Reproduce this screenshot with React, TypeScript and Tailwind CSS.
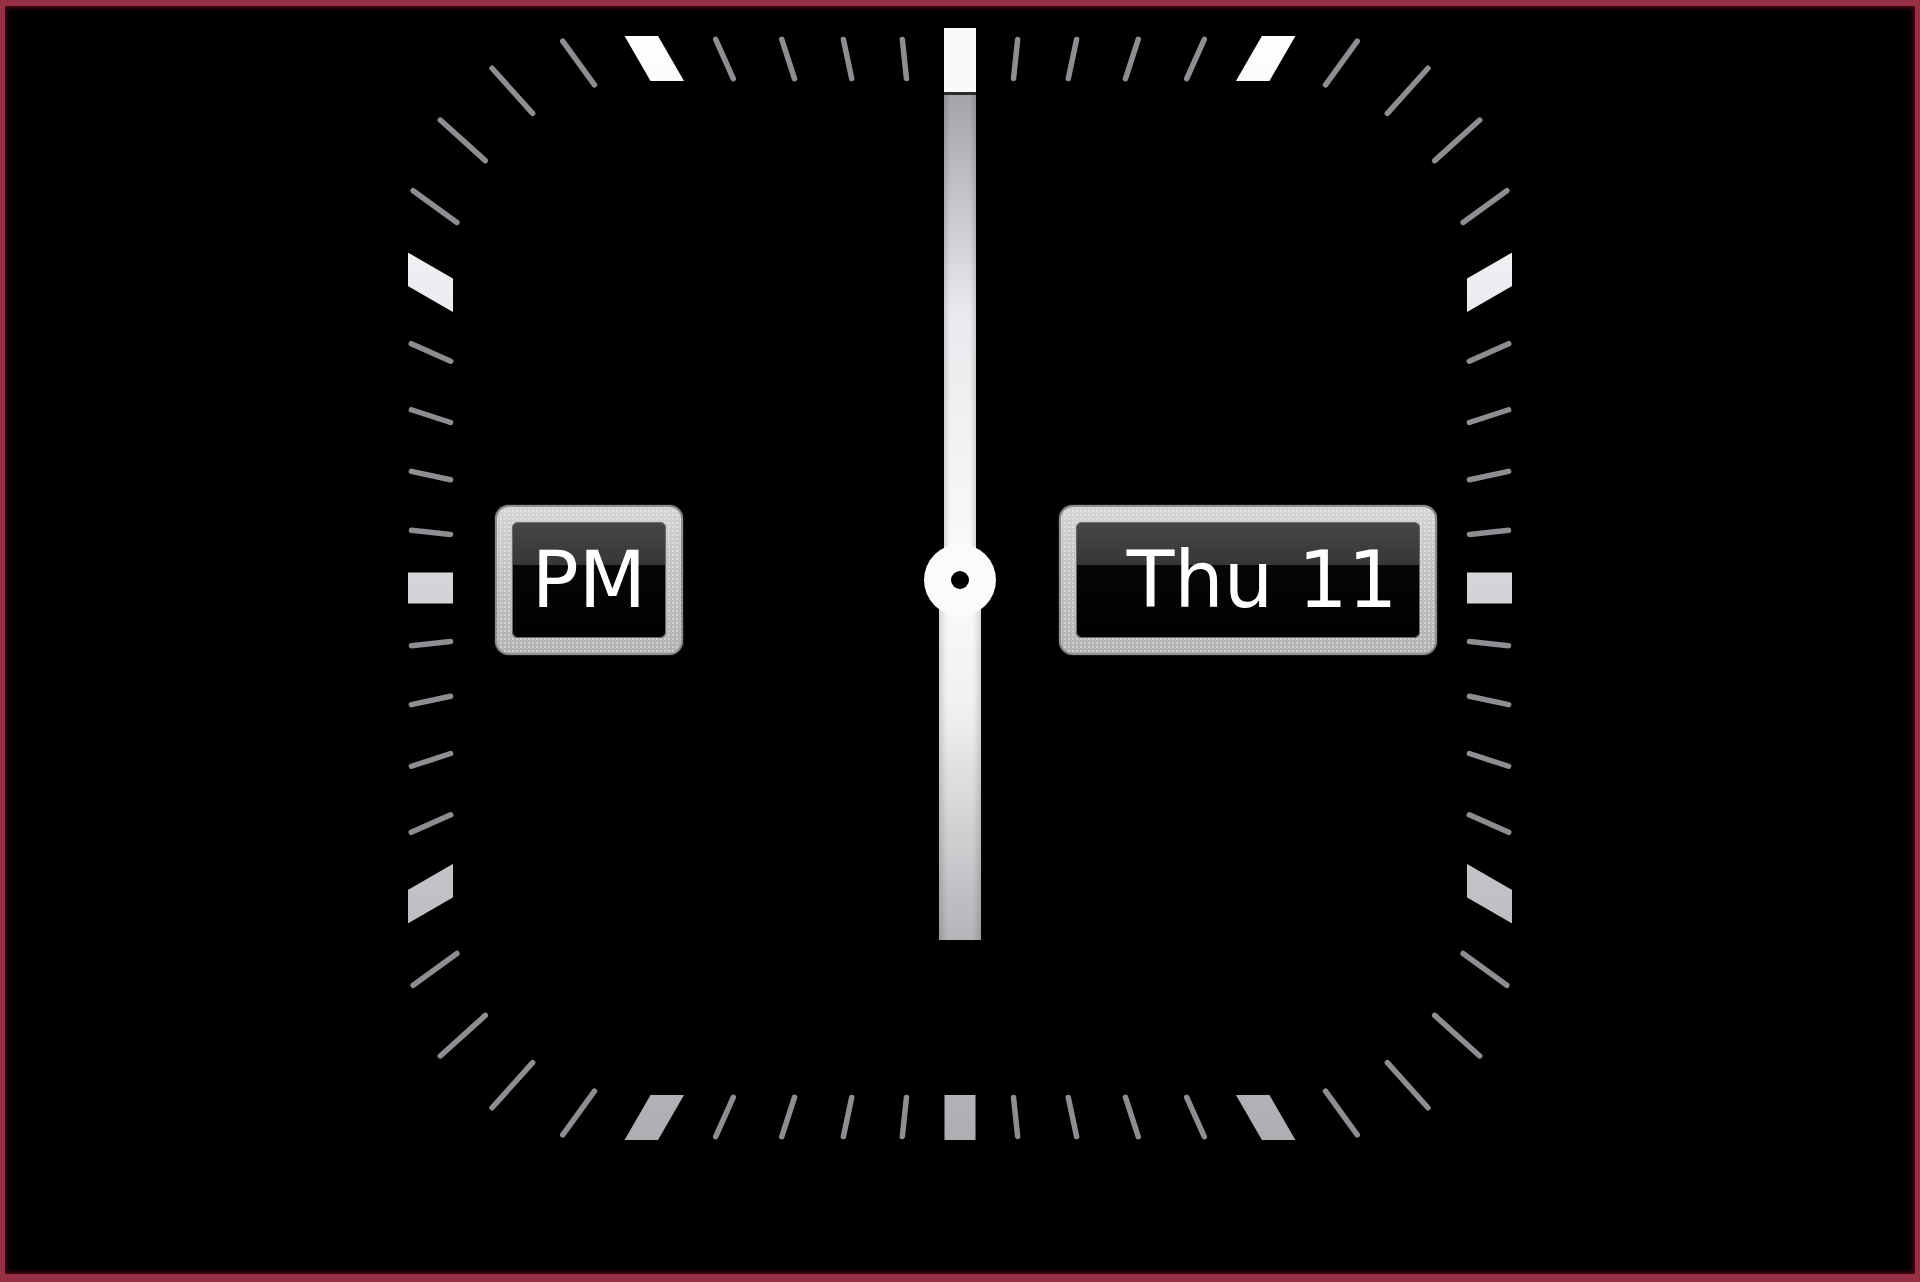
import React from "react";

const CX = 960;
const CY = 588;
const PX = 960;
const PY = 580;

function rr(dx: number, dy: number, H: number, R: number): number {
  const ax = Math.abs(dx);
  const ay = Math.abs(dy);
  const a = H - R;
  const tx = ax > 1e-9 ? H / ax : Infinity;
  const ty = ay > 1e-9 ? H / ay : Infinity;
  let t = Math.min(tx, ty);
  const px = ax * t;
  const py = ay * t;
  if (px > a && py > a) {
    const b = a * (ax + ay);
    const c = 2 * a * a - R * R;
    t = b + Math.sqrt(b * b - c);
  }
  return t;
}

function Dial() {
  const minute: React.ReactNode[] = [];
  const hour: React.ReactNode[] = [];
  for (let i = 0; i < 60; i++) {
    const ang = (i * 6 * Math.PI) / 180;
    const dx = Math.sin(ang);
    const dy = -Math.cos(ang);
    if (i % 5 === 0) {
      const w = i % 15 === 0 ? 31 : 29;
      hour.push(
        <line
          key={"h" + i}
          x1={CX}
          y1={CY}
          x2={CX + dx * 900}
          y2={CY + dy * 900}
          stroke="url(#hourGrad)"
          strokeWidth={w}
        />
      );
    } else {
      const tOut = rr(dx, dy, 551, 180) - 2.5;
      const tIn = rr(dx, dy, 507, 190) + 2.5;
      minute.push(
        <line
          key={"m" + i}
          x1={CX + dx * tIn}
          y1={CY + dy * tIn}
          x2={CX + dx * tOut}
          y2={CY + dy * tOut}
          stroke="#8e8e92"
          strokeWidth={5.5}
          strokeLinecap="round"
        />
      );
    }
  }
  return (
    <svg
      width={1910}
      height={1268}
      viewBox="5 6 1910 1268"
      className="block [grid-area:1/1]"
    >
      <defs>
        <mask id="band" maskUnits="userSpaceOnUse" x="0" y="0" width="1920" height="1282">
          <rect x={CX - 552} y={CY - 552} width={1104} height={1104} rx={180} fill="white" />
          <rect x={CX - 507} y={CY - 507} width={1014} height={1014} rx={190} fill="black" />
        </mask>
        <linearGradient id="hourGrad" gradientUnits="userSpaceOnUse" x1="0" y1="30" x2="0" y2="1142">
          <stop offset="0" stopColor="#ffffff" />
          <stop offset="0.25" stopColor="#ececf0" />
          <stop offset="0.5" stopColor="#d4d4d8" />
          <stop offset="0.75" stopColor="#c4c4c8" />
          <stop offset="1" stopColor="#aeaeb2" />
        </linearGradient>
        <linearGradient id="minGrad" gradientUnits="userSpaceOnUse" x1="0" y1="95" x2="0" y2="580">
          <stop offset="0" stopColor="#a4a4a8" />
          <stop offset="0.45" stopColor="#eaeaee" />
          <stop offset="1" stopColor="#fbfbfb" />
        </linearGradient>
        <linearGradient id="hrGrad" gradientUnits="userSpaceOnUse" x1="0" y1="580" x2="0" y2="940">
          <stop offset="0" stopColor="#fbfbfb" />
          <stop offset="0.35" stopColor="#f1f1f3" />
          <stop offset="1" stopColor="#b4b4b8" />
        </linearGradient>
        <linearGradient id="edge" x1="0" y1="0" x2="1" y2="0">
          <stop offset="0" stopColor="#000" stopOpacity="0.14" />
          <stop offset="0.2" stopColor="#000" stopOpacity="0" />
          <stop offset="0.8" stopColor="#000" stopOpacity="0" />
          <stop offset="1" stopColor="#000" stopOpacity="0.14" />
        </linearGradient>
      </defs>

      <g>{minute}</g>
      <g mask="url(#band)">{hour}</g>

      {/* minute hand */}
      <rect x={944} y={28} width={32} height={64} fill="#fafafa" />
      <rect x={944} y={92} width={32} height={3} fill="#2a2a2a" />
      <rect x={944} y={95} width={32} height={PY - 95} fill="url(#minGrad)" />
      <rect x={944} y={95} width={32} height={PY - 95} fill="url(#edge)" />

      {/* hour hand */}
      <rect x={939} y={PY} width={42} height={940 - PY} fill="url(#hrGrad)" />
      <rect x={939} y={PY + 30} width={42} height={940 - PY - 30} fill="url(#edge)" />

      {/* pivot */}
      <circle cx={PX} cy={PY} r={36} fill="#fbfbfb" />
      <circle cx={PX} cy={PY} r={9} fill="#000" />
    </svg>
  );
}

function Badge({ text, width, extraPad }: { text: string; width: string; extraPad: string }) {
  return (
    <div
      className={
        width +
        " h-[150px] rounded-[14px] p-[17px] bg-[radial-gradient(circle,rgba(255,255,255,0.35)_0.8px,transparent_1.4px),linear-gradient(180deg,#d4d4d4_0%,#c2c2c2_45%,#b2b2b2_100%)] bg-[length:4px_4px,100%_100%] shadow-[inset_0_0_0_2px_#8e8e8e,0_0_2px_#555]"
      }
    >
      <div className="w-full h-full rounded-[6px] overflow-hidden bg-[linear-gradient(180deg,#474747_0%,#363636_37%,#060606_37%,#000000_100%)] shadow-[inset_0_0_0_1px_#6a6a6a] flex items-center justify-center">
        <span
          className={
            extraPad +
            " text-white text-[78px] leading-none font-['DejaVu_Sans',sans-serif] whitespace-pre"
          }
        >
          {text}
        </span>
      </div>
    </div>
  );
}

export default function App() {
  return (
    <div className="w-[1920px] h-[1282px] bg-black border-[#973044] border-t-[6px] border-b-[8px] border-x-[5px] shadow-[inset_0_0_4px_2px_rgba(90,10,25,0.9)]">
      <div className="grid w-full h-full">
        <Dial />
        <div className="[grid-area:1/1] flex items-start pt-[499px] pl-[490px]">
          <Badge text="PM" width="w-[188px]" extraPad="pl-0" />
          <div className="ml-[376px]">
            <Badge text="Thu 11" width="w-[378px]" extraPad="pl-[28px]" />
          </div>
        </div>
      </div>
    </div>
  );
}
